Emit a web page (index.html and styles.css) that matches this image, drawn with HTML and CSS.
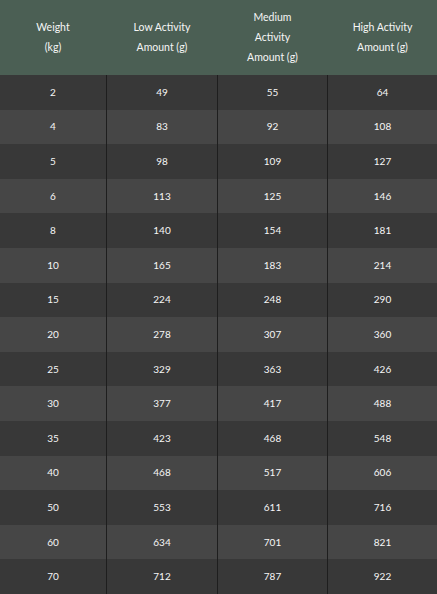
FILE: index.html
```html
<!DOCTYPE html>
<html>
<head>
<meta charset="utf-8">
<link rel="stylesheet" href="styles.css">
</head>
<body>
<div class="table">
  <div class="row head">
    <div class="cell">Weight<br>(kg)</div>
    <div class="cell">Low Activity<br>Amount (g)</div>
    <div class="cell">Medium<br>Activity<br>Amount (g)</div>
    <div class="cell">High Activity<br>Amount (g)</div>
  </div>
  <div class="row"><div class="cell">2</div><div class="cell">49</div><div class="cell">55</div><div class="cell">64</div></div>
  <div class="row alt"><div class="cell">4</div><div class="cell">83</div><div class="cell">92</div><div class="cell">108</div></div>
  <div class="row"><div class="cell">5</div><div class="cell">98</div><div class="cell">109</div><div class="cell">127</div></div>
  <div class="row alt"><div class="cell">6</div><div class="cell">113</div><div class="cell">125</div><div class="cell">146</div></div>
  <div class="row"><div class="cell">8</div><div class="cell">140</div><div class="cell">154</div><div class="cell">181</div></div>
  <div class="row alt"><div class="cell">10</div><div class="cell">165</div><div class="cell">183</div><div class="cell">214</div></div>
  <div class="row"><div class="cell">15</div><div class="cell">224</div><div class="cell">248</div><div class="cell">290</div></div>
  <div class="row alt"><div class="cell">20</div><div class="cell">278</div><div class="cell">307</div><div class="cell">360</div></div>
  <div class="row"><div class="cell">25</div><div class="cell">329</div><div class="cell">363</div><div class="cell">426</div></div>
  <div class="row alt"><div class="cell">30</div><div class="cell">377</div><div class="cell">417</div><div class="cell">488</div></div>
  <div class="row"><div class="cell">35</div><div class="cell">423</div><div class="cell">468</div><div class="cell">548</div></div>
  <div class="row alt"><div class="cell">40</div><div class="cell">468</div><div class="cell">517</div><div class="cell">606</div></div>
  <div class="row"><div class="cell">50</div><div class="cell">553</div><div class="cell">611</div><div class="cell">716</div></div>
  <div class="row alt"><div class="cell">60</div><div class="cell">634</div><div class="cell">701</div><div class="cell">821</div></div>
  <div class="row"><div class="cell">70</div><div class="cell">712</div><div class="cell">787</div><div class="cell">922</div></div>
</div>
</body>
</html>
```
FILE: styles.css
```css
html, body {
  margin: 0;
  padding: 0;
  background: #383838;
}
body {
  font-family: Lato, "Open Sans", sans-serif;
  color: #f6f6f6;
  overflow: hidden;
}
.table {
  width: 437px;
}
.row {
  display: grid;
  grid-template-columns: 106px 110px 109px 1fr;
  column-gap: 1px;
  background: #1e1e1e;
  height: 34.6px;
}
.row .cell {
  background: #383838;
  display: flex;
  align-items: center;
  justify-content: center;
  text-align: center;
  font-size: 10px;
  padding-bottom: 1px;
}
.row.alt .cell {
  background: #464646;
}
.row.head {
  height: 75px;
  background: #4b5f54;
}
.row.head .cell {
  background: #4b5f54;
  font-size: 10.5px;
  line-height: 20px;
  padding-bottom: 2px;
}
```
